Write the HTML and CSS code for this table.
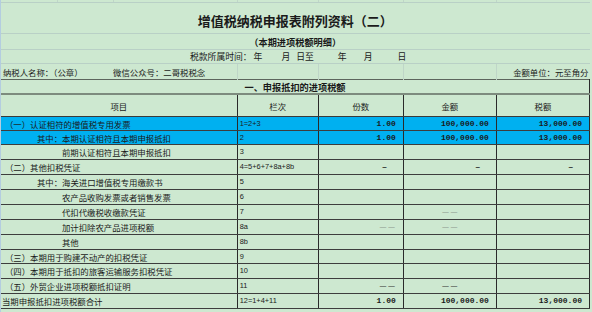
FILE: index.html
```html
<!DOCTYPE html>
<html lang="zh-CN">
<head>
<meta charset="utf-8">
<title>增值税纳税申报表附列资料（二）</title>
<link rel="stylesheet" href="styles.css">
</head>
<body>
<div class="sheet">
<table class="grid">
<colgroup><col class="c1"><col class="c2"><col class="c3"><col class="c4"><col class="c5"><col class="c6"><col class="c7"></colgroup>
<tr class="r-top"><td class="gl"></td><td class="gl"></td><td class="gl"></td><td class="gl"></td><td class="gl"></td><td class="gl"></td><td></td></tr>
<tr class="r-title"><td colspan="7" class="title">增值税纳税申报表附列资料（二）</td></tr>
<tr class="r-sub"><td colspan="7" class="sub">（本期进项税额明细）</td></tr>
<tr class="r-period"><td colspan="7" class="period">税款所属时间：<span class="p2">年</span><span class="p19">月</span><span class="p6">日至</span><span class="p24">年</span><span class="p17">月</span><span class="p25">日</span></td></tr>
<tr class="r-info"><td colspan="2" class="txt l1">纳税人名称：（公章）</td><td class="txt gl">微信公众号：二哥税税念</td><td class="gl"></td><td class="gl"></td><td class="gl"></td><td class="txt unit">金额单位：元至角分</td></tr>
<tr class="r-sec"><td colspan="7" class="sec">一、申报抵扣的进项税额</td></tr>
<tr class="r-head"><th colspan="3">项目</th><th>栏次</th><th>份数</th><th>金额</th><th>税额</th></tr>
<tr class="h14 blue"><td colspan="3" class="item i0">（一）认证相符的增值税专用发票</td><td class="no">1=2+3</td><td class="num">1.00</td><td class="num">100,000.00</td><td class="num">13,000.00</td></tr>
<tr class="h14 blue"><td colspan="3" class="item i1">其中：本期认证相符且本期申报抵扣</td><td class="no">2</td><td class="num">1.00</td><td class="num">100,000.00</td><td class="num">13,000.00</td></tr>
<tr class="h15"><td colspan="3" class="item i2">前期认证相符且本期申报抵扣</td><td class="no">3</td><td></td><td></td><td></td></tr>
<tr class="h15"><td colspan="3" class="item i0">（二）其他扣税凭证</td><td class="no">4=5+6+7+8a+8b</td><td class="dash">–</td><td class="dash">–</td><td class="dash">–</td></tr>
<tr class="h15"><td colspan="3" class="item i1">其中：海关进口增值税专用缴款书</td><td class="no">5</td><td></td><td></td><td></td></tr>
<tr class="h15"><td colspan="3" class="item i2">农产品收购发票或者销售发票</td><td class="no">6</td><td></td><td></td><td></td></tr>
<tr class="h15"><td colspan="3" class="item i2">代扣代缴税收缴款凭证</td><td class="no">7</td><td></td><td class="dd mid grey">——</td><td></td></tr>
<tr class="h15"><td colspan="3" class="item i2">加计扣除农产品进项税额</td><td class="no">8a</td><td class="dd right grey">——</td><td class="dd mid grey">——</td><td></td></tr>
<tr class="h15"><td colspan="3" class="item i2">其他</td><td class="no">8b</td><td></td><td></td><td></td></tr>
<tr class="h14"><td colspan="3" class="item i0">（三）本期用于购建不动产的扣税凭证</td><td class="no">9</td><td></td><td></td><td></td></tr>
<tr class="h15"><td colspan="3" class="item i0">（四）本期用于抵扣的旅客运输服务扣税凭证</td><td class="no">10</td><td></td><td></td><td></td></tr>
<tr class="h15"><td colspan="3" class="item i0">（五）外贸企业进项税额抵扣证明</td><td class="no">11</td><td class="dd right">——</td><td class="dd mid">——</td><td></td></tr>
<tr class="h15"><td colspan="3" class="item it">当期申报抵扣进项税额合计</td><td class="no">12=1+4+11</td><td class="num">1.00</td><td class="num">100,000.00</td><td class="num">13,000.00</td></tr>
</table>
</div>
</body>
</html>
```
FILE: styles.css
```css
html, body {
  margin: 0;
  padding: 0;
  background: #cde8d0;
}
.sheet {
  width: 591px;
  height: 312px;
  background: #cde8d0;
  border-left: 1px solid #b4cde0;
  overflow: hidden;
  font-family: "Noto Sans CJK SC", "Noto Sans", sans-serif;
  color: #1a1a1a;
}
.grid {
  border-collapse: collapse;
  table-layout: fixed;
  width: 589px;
}
.c1 { width: 56px; }
.c2 { width: 56px; }
.c3 { width: 124px; }
.c4 { width: 81px; }
.c5 { width: 85px; }
.c6 { width: 93px; }
.c7 { width: 93px; }
td, th {
  padding: 0;
  font-size: 8.4px;
  line-height: 10px;
  white-space: nowrap;
  overflow: hidden;
}
.r-top td { height: 2px; border-bottom: 1px solid #b9d0c6; }
.gl { border-right: 1px solid #bfd6c8; }
.r-title td { height: 25px; border-bottom: 1px solid #b9d0c6; }
.r-sub td { height: 15px; border-bottom: 1px solid #b9d0c6; }
.r-period td { height: 13px; border-bottom: 1px solid #b9d0c6; }
.r-info td { height: 15px; }
.title {
  text-align: center;
  vertical-align: bottom;
  padding-bottom: 5px;
  font-size: 13px;
  line-height: 15px;
  font-weight: 700;
  color: #1a1a1a;
}
.sub {
  text-align: center;
  font-size: 9.2px;
  font-weight: 700;
}
.period {
  padding-left: 189px;
  font-size: 8.8px;
}
.p2 { padding-left: 2px; }
.p19 { padding-left: 19px; }
.p6 { padding-left: 6px; }
.p24 { padding-left: 24px; }
.p17 { padding-left: 17px; }
.p25 { padding-left: 25px; }
.l1 { padding-left: 2px; }
.unit { text-align: right; padding-right: 1px; }
.r-sec td {
  height: 13px;
  border-top: 1px solid #5d655d;
  border-right: 1px solid #2a2a2a;
  border-bottom: 2px solid #7d8b7e;
  text-align: center;
  font-size: 9.2px;
  font-weight: 700;
}
.r-head th {
  height: 21px;
  font-weight: 400;
  text-align: center;
  border-right: 1px solid #2a2a2a;
  border-bottom: 1px solid #3a3a3a;
}
.h14 td { height: 13px; }
.h15 td { height: 14px; }
.h14 td, .h15 td {
  border-right: 1px solid #2a2a2a;
  border-bottom: 1px solid #3d3d3d;
}
.blue td { background: #00b0f0; }
.item { text-align: left; }
.i0 { padding-left: 4px; }
.i1 { padding-left: 36px; }
.i2 { padding-left: 61px; }
.it { padding-left: 1px; }
.no {
  padding-left: 2px;
  font-family: "Liberation Sans", sans-serif;
  font-size: 7.4px;
}
.num {
  text-align: right;
  padding-right: 7px;
  font-family: "Liberation Mono", monospace;
  font-weight: 700;
  font-size: 8px;
}
.dash {
  text-align: right;
  padding-right: 16px;
  font-family: "Liberation Sans", sans-serif;
  font-weight: 700;
  font-size: 8px;
}
.dd {
  font-family: "Liberation Sans", sans-serif;
  font-size: 6.5px;
  letter-spacing: 2px;
  color: #2a2a2a;
}
.dd.right { text-align: right; padding-right: 6px; }
.dd.mid { text-align: center; padding-left: 2px; }
.dd.grey { color: #8a968b; }
```
